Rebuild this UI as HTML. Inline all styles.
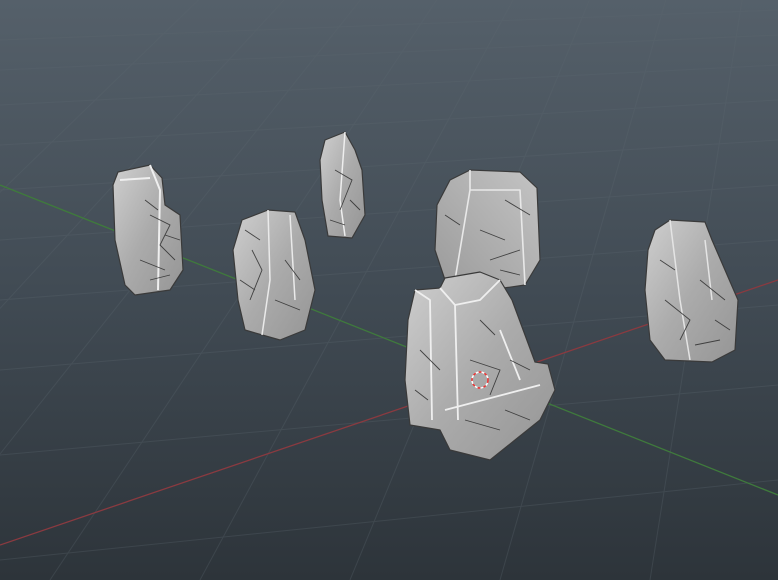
<!DOCTYPE html>
<html><head><meta charset="utf-8"><style>
html,body{margin:0;padding:0;width:778px;height:580px;overflow:hidden;background:#3a434b}
svg{display:block}
</style></head><body>
<svg width="778" height="580" viewBox="0 0 778 580" xmlns="http://www.w3.org/2000/svg">
<defs>
<linearGradient id="bg" x1="0" y1="0" x2="0" y2="1">
<stop offset="0" stop-color="#55606a"/><stop offset="0.5" stop-color="#414b54"/><stop offset="1" stop-color="#2d343a"/>
</linearGradient>
<linearGradient id="rk" x1="0" y1="0" x2="1" y2="1">
<stop offset="0" stop-color="#cfcfcf"/><stop offset="0.5" stop-color="#ababab"/><stop offset="1" stop-color="#959595"/>
</linearGradient>
<linearGradient id="rk2" x1="1" y1="0" x2="0" y2="1">
<stop offset="0" stop-color="#c4c4c4"/><stop offset="1" stop-color="#9a9a9a"/>
</linearGradient>
</defs>
<rect width="778" height="580" fill="url(#bg)"/>
<g stroke="#5d6870" stroke-width="1" opacity="0.3" fill="none">
<path d="M-400 580 L250 -50 M-250 580 L330 -50 M-100 580 L400 -50 M50 580 L470 -50 M200 580 L540 -50 M350 580 L610 -50 M500 580 L680 -50 M650 580 L750 -50 M800 580 L820 -50 M950 580 L890 -50 M1100 580 L960 -50"/>
<path d="M0 40 L778 10 M0 70 L778 35 M0 105 L778 65 M0 145 L778 100 M0 190 L778 140 M0 240 L778 185 M0 300 L778 240 M0 370 L778 305 M0 455 L778 385 M0 560 L778 480"/>
</g>
<line x1="0" y1="545" x2="778" y2="280" stroke="#8a3a40" stroke-width="1.3"/>
<line x1="0" y1="185" x2="778" y2="495" stroke="#3f7a3c" stroke-width="1.3"/>

<g stroke="#3a3a3a" stroke-width="1.2" stroke-linejoin="round">
<path d="M118 172 L150 165 L162 178 L165 205 L180 215 L183 270 L170 290 L135 295 L125 285 L115 240 L113 185 Z" fill="url(#rk)"/>
<path d="M150 165 L160 190 L158 290 M120 180 L150 178" fill="none" stroke="#efefef" stroke-width="2"/>
<path d="M325 140 L345 132 L355 150 L362 170 L365 215 L352 238 L328 236 L322 200 L320 160 Z" fill="url(#rk)"/>
<path d="M345 132 L340 200 L345 236" fill="none" stroke="#eee" stroke-width="1.5"/>
<path d="M242 220 L268 210 L295 212 L305 240 L315 290 L305 330 L280 340 L245 330 L238 300 L233 250 Z" fill="url(#rk)"/>
<path d="M268 210 L270 280 L262 335 M290 215 L295 300" fill="none" stroke="#eaeaea" stroke-width="1.5"/>
<path d="M450 180 L470 170 L520 172 L537 188 L540 260 L525 285 L490 290 L445 280 L435 250 L437 205 Z" fill="url(#rk2)"/>
<path d="M470 170 L470 190 L455 280 M470 190 L520 190 L525 285" fill="none" stroke="#e8e8e8" stroke-width="1.6"/>
<path d="M655 230 L670 220 L705 222 L712 240 L725 270 L738 300 L735 350 L712 362 L665 360 L650 340 L645 290 L648 250 Z" fill="url(#rk)"/>
<path d="M670 220 L680 300 L690 360 M705 240 L712 300" fill="none" stroke="#e4e4e4" stroke-width="1.5"/>
<path d="M415 290 L440 288 L445 278 L480 272 L500 280 L512 300 L525 335 L535 362 L548 364 L555 390 L540 420 L515 440 L490 460 L450 450 L440 430 L410 425 L405 380 L408 320 Z" fill="url(#rk)"/>
<path d="M440 288 L455 305 L458 420 M455 305 L480 300 L500 280 M415 290 L430 300 L432 420 M445 410 L540 385 M500 330 L520 380" fill="none" stroke="#efefef" stroke-width="1.8"/>
</g>
<g stroke="#2e2e2e" stroke-width="0.9" fill="none" opacity="0.85">
<path d="M150 215 L170 225 L160 245 L175 260 M140 260 L165 270 M145 200 L158 210 M165 235 L180 240 M150 280 L170 275"/>
<path d="M252 250 L262 270 L250 300 M285 260 L300 280 M245 230 L260 240 M275 300 L300 310 M240 280 L255 290"/>
<path d="M335 170 L352 180 L340 210 M350 200 L360 210 M330 220 L345 225"/>
<path d="M480 230 L505 240 M490 260 L520 250 M445 215 L460 225 M505 200 L530 215 M500 270 L520 275"/>
<path d="M665 300 L690 320 L680 340 M700 280 L725 300 M715 320 L730 330 M660 260 L675 270 M695 345 L720 340"/>
<path d="M470 360 L500 370 L490 395 M465 420 L500 430 M420 350 L440 370 M510 360 L530 370 M415 390 L428 400 M505 410 L530 420 M480 320 L495 335"/>
</g>
<circle cx="480" cy="380" r="8" fill="none" stroke="#e33" stroke-width="1.5" stroke-dasharray="3 3"/>
<circle cx="480" cy="380" r="8" fill="none" stroke="#fff" stroke-width="1.5" stroke-dasharray="3 3" stroke-dashoffset="3"/>
</svg>
</body></html>
